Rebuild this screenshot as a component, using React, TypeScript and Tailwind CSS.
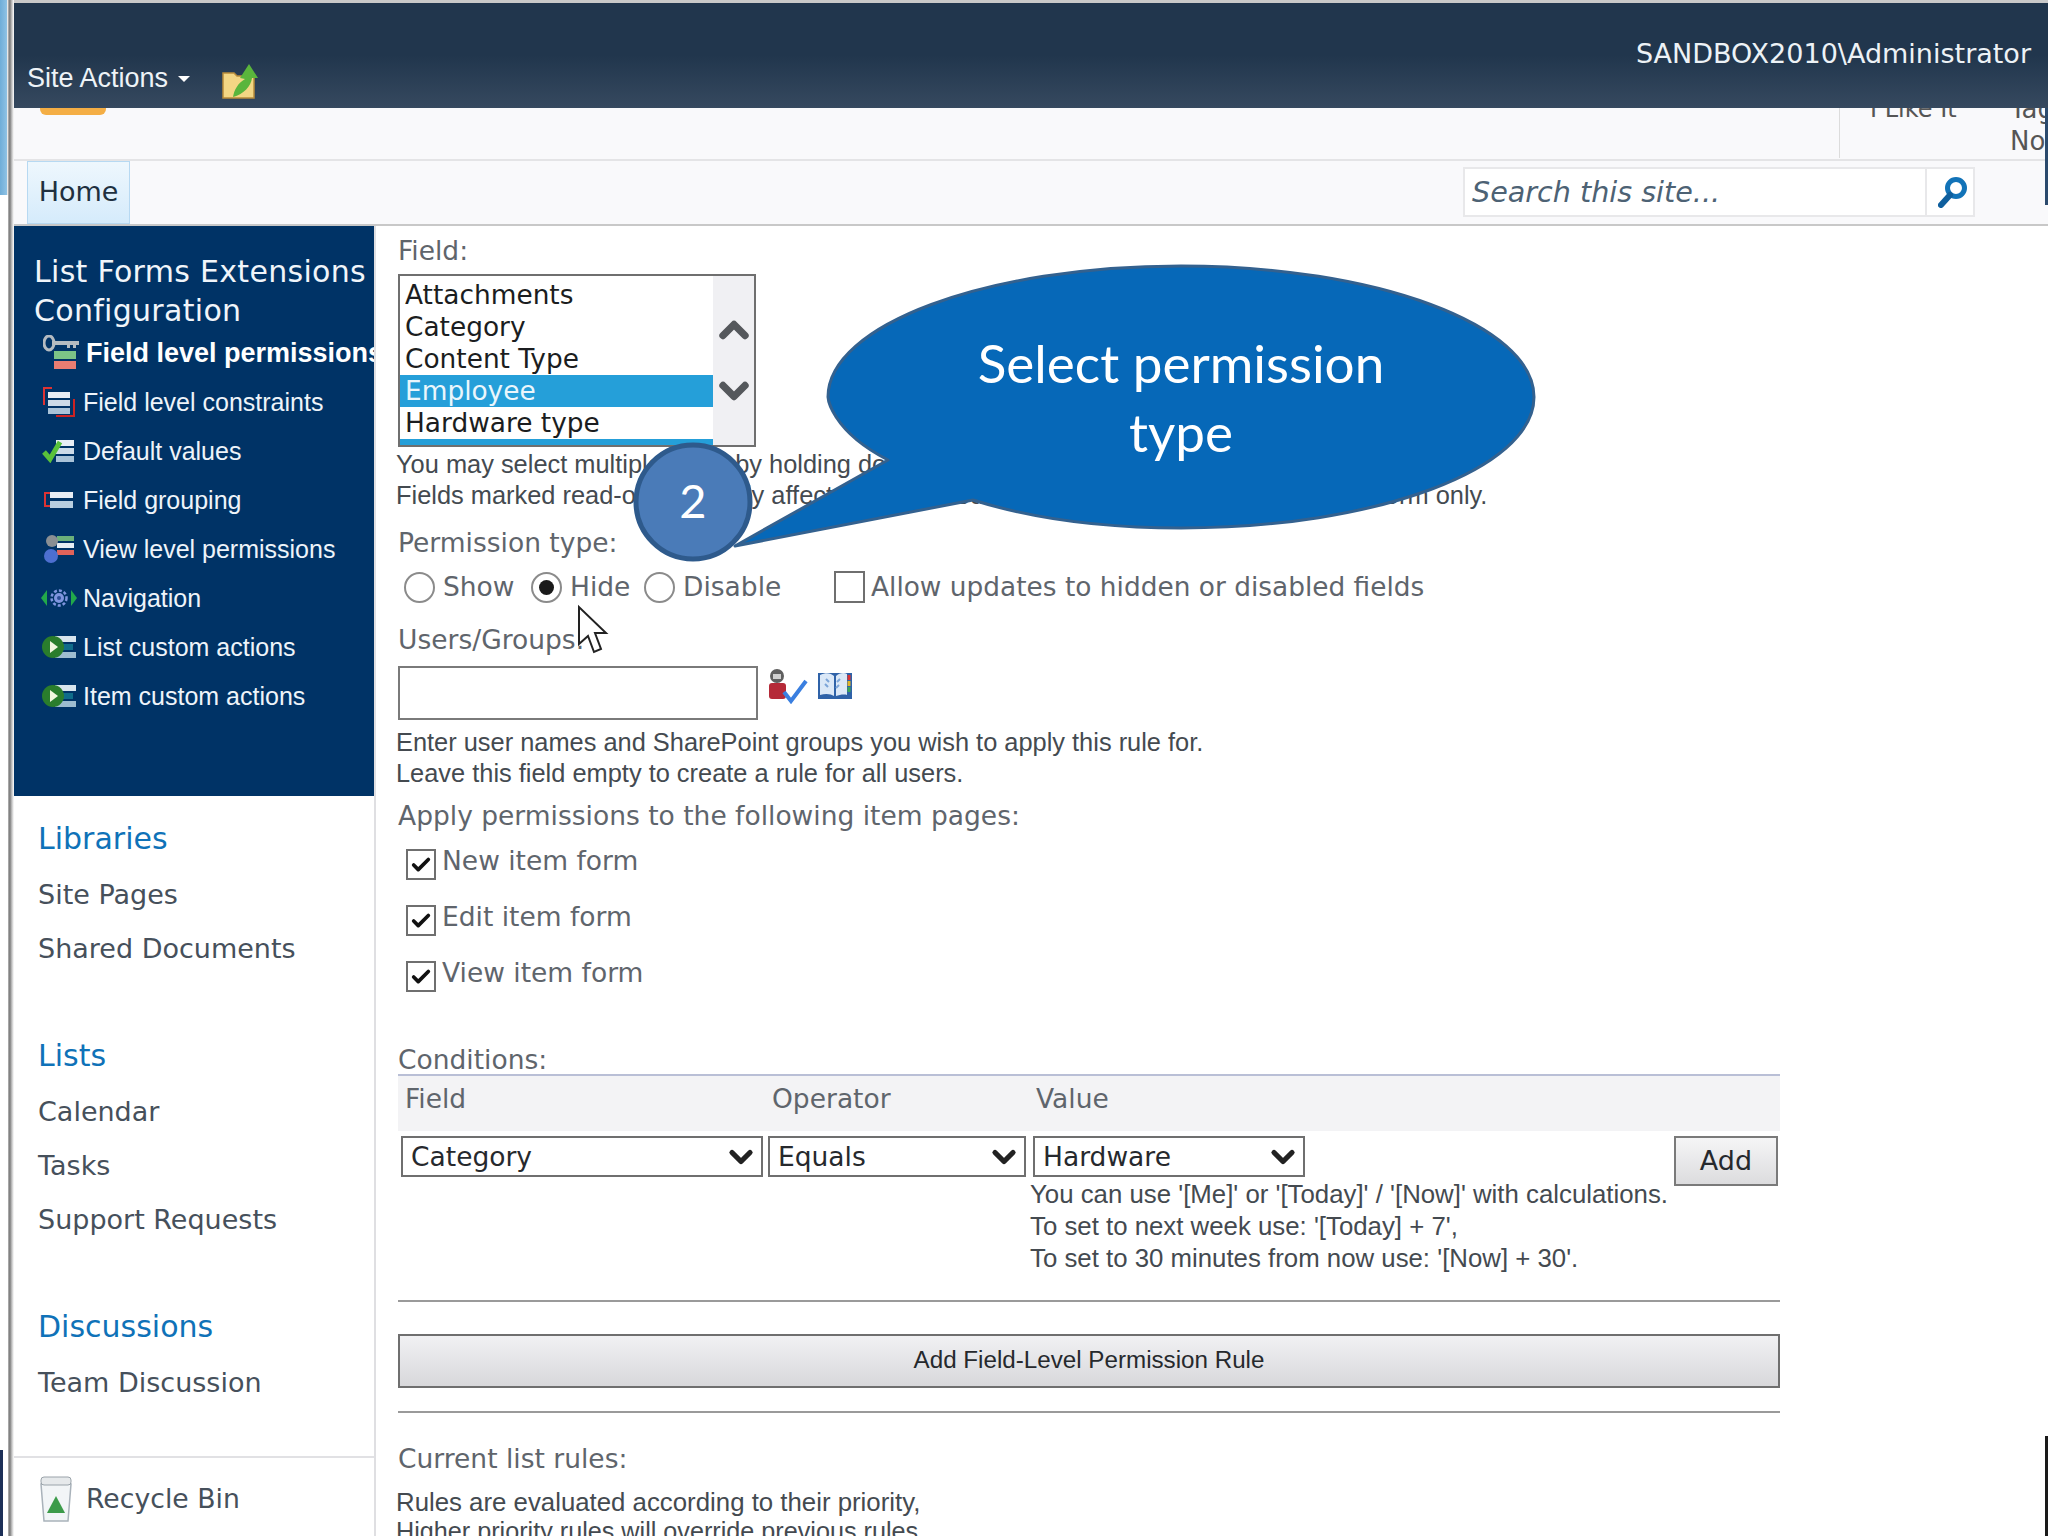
import { Check, ChevronDown, ChevronUp } from "lucide-react";

const navItems = [
  { label: "Field level constraints", icon: "constraints" },
  { label: "Default values", icon: "defaults" },
  { label: "Field grouping", icon: "grouping" },
  { label: "View level permissions", icon: "view" },
  { label: "Navigation", icon: "navigation" },
  { label: "List custom actions", icon: "action" },
  { label: "Item custom actions", icon: "action" },
];

const listItems = ["Attachments", "Category", "Content Type", "Employee", "Hardware type"];

const verdana = "font-['DejaVu_Sans',sans-serif]";
const tahoma = "font-['Liberation_Sans',sans-serif]";

// little stacked bars used by most of the sidebar icons
function Bars({ x = 14, y = 4, w = 20 }: { x?: number; y?: number; w?: number }) {
  return (
    <g>
      <rect x={x} y={y} width={w} height="6" fill="#e8eef5" />
      <rect x={x} y={y + 8} width={w} height="6" fill="#cddbe8" />
      <rect x={x} y={y + 16} width={w} height="6" fill="#a9c3d8" />
    </g>
  );
}

function NavIcon({ type }: { type: string }) {
  if (type === "permissions") {
    return (
      <svg className="shrink-0" width="38" height="36" viewBox="0 0 38 36">
        <ellipse cx="6" cy="8" rx="5" ry="7" fill="none" stroke="#b4bbc1" strokeWidth="3" />
        <path d="M9 6h27v4h-3v3h-3v-3h-3v3h-3v-3H9z" fill="#b4bbc1" />
        <rect x="11" y="16" width="22" height="8" fill="#7cc487" />
        <rect x="11" y="26" width="22" height="8" fill="#ea7d72" />
      </svg>
    );
  }
  if (type === "constraints") {
    return (
      <svg width="32" height="30" viewBox="0 0 32 30">
        <path d="M9 1H1v17" stroke="#d33" strokeWidth="2" fill="none" />
        <path d="M31 12v17H13" stroke="#c22" strokeWidth="2" fill="none" />
        <Bars x={5} y={5} w={22} />
      </svg>
    );
  }
  if (type === "defaults") {
    return (
      <svg width="34" height="24" viewBox="0 0 34 24">
        <Bars x={14} y={1} w={18} />
        <path d="M2 13l6 7L18 3" stroke="#59c13a" strokeWidth="5" fill="none" />
      </svg>
    );
  }
  if (type === "grouping") {
    return (
      <svg width="30" height="18" viewBox="0 0 30 18">
        <path d="M8 2H1v13h7" stroke="#d33" strokeWidth="2" fill="none" />
        <rect x="6" y="1" width="23" height="6" fill="#e8eef5" />
        <rect x="6" y="10" width="23" height="7" fill="#b9cfe0" />
      </svg>
    );
  }
  if (type === "view") {
    return (
      <svg width="32" height="30" viewBox="0 0 32 30">
        <rect x="14" y="2" width="17" height="5" fill="#6cb07a" />
        <rect x="14" y="9" width="17" height="5" fill="#e8eef5" />
        <rect x="14" y="16" width="17" height="5" fill="#e0635a" />
        <circle cx="9" cy="7" r="6" fill="#8a8f93" />
        <circle cx="8" cy="22" r="7" fill="#4d6fd0" />
      </svg>
    );
  }
  if (type === "navigation") {
    return (
      <svg width="36" height="20" viewBox="0 0 36 20">
        <path d="M0 10l6-8v16z" fill="#22a84a" />
        <path d="M36 10l-6-8v16z" fill="#22a84a" />
        <circle cx="18" cy="10" r="7.5" fill="none" stroke="#7f95de" strokeWidth="2.5" strokeDasharray="3 2" />
        <circle cx="18" cy="10" r="5" fill="#7f95de" />
        <circle cx="18" cy="10" r="2" fill="#2b4d96" />
      </svg>
    );
  }
  return (
    <svg width="36" height="26" viewBox="0 0 36 26">
      <rect x="14" y="2" width="21" height="6" fill="#d8e5ee" />
      <rect x="18" y="10" width="14" height="6" fill="#0f6c8a" />
      <rect x="14" y="18" width="21" height="6" fill="#9dbccf" />
      <circle cx="12" cy="13" r="11" fill="#2a7d2c" />
      <path d="M9 7l8 6-8 6z" fill="#f2f7e0" />
    </svg>
  );
}

function NavLink({ children, bold }: { children: React.ReactNode; bold?: boolean }) {
  return (
    <div className={`whitespace-nowrap leading-[32px] ${tahoma} ${bold ? "text-[27px] font-bold text-white" : "text-[25px] text-[#eef4fa]"}`}>
      {children}
    </div>
  );
}

function SideLink({ children }: { children: React.ReactNode }) {
  return <div className={`h-[54px] pl-[24px] text-[27px] leading-[54px] text-[#46505b] ${verdana}`}>{children}</div>;
}

function SideHeading({ children }: { children: React.ReactNode }) {
  return <div className={`mb-[9px] pl-[24px] text-[30px] leading-[40px] text-[#0f72b8] ${verdana}`}>{children}</div>;
}

function Label({ children, className = "" }: { children: React.ReactNode; className?: string }) {
  return <div className={`text-[26.5px] leading-[32px] whitespace-nowrap text-[#5f656c] ${verdana} ${className}`}>{children}</div>;
}

function Help({ children }: { children: React.ReactNode }) {
  return <div className={`text-[25.4px] leading-[31px] whitespace-nowrap text-[#444a50] ${tahoma}`}>{children}</div>;
}

function Hint({ children }: { children: React.ReactNode }) {
  return <div className={`text-[25.8px] leading-[32px] whitespace-nowrap text-[#444a50] ${tahoma}`}>{children}</div>;
}

function Radio({ on }: { on?: boolean }) {
  return (
    <span className="flex h-[31px] w-[31px] items-center justify-center rounded-full border-2 border-[#8b8b8b] bg-white">
      {on && <span className="h-[15px] w-[15px] rounded-full bg-[#1a1a1a]" />}
    </span>
  );
}

function CheckRow({ label }: { label: string }) {
  return (
    <div className="flex h-[56px] items-start pl-[8px]">
      <span className="mt-[4px] flex h-[31px] w-[30px] items-center justify-center border-2 border-[#6f6f6f] bg-white">
        <Check size={22} strokeWidth={4} className="text-[#111]" />
      </span>
      <span className={`ml-[6px] text-[26.5px] leading-[32px] text-[#5f656c] ${verdana}`}>{label}</span>
    </div>
  );
}

function Dropdown({ value, width }: { value: string; width: string }) {
  return (
    <div className={`flex h-[41px] items-center justify-between overflow-hidden border-2 border-[#6f6f6f] bg-white pl-[8px] pr-[2px] ${width}`}>
      <span className={`text-[26.5px] leading-[32px] text-[#26292d] ${verdana}`}>{value}</span>
      <ChevronDown size={36} strokeWidth={3.5} className="text-[#222]" />
    </div>
  );
}

export default function App() {
  return (
    <div className="relative flex h-[1536px] w-[2048px] overflow-hidden bg-white">
      {/* window edge on the left */}
      <div className="flex w-[14px] shrink-0 flex-col">
        <div className="h-[195px] bg-[linear-gradient(90deg,#6fadd8_0,#8fc2e4_50%,#e8e8e8_50%,#e8e8e8_58%,#b5b5b5_58%,#777_70%,#c4c4c4_85%,#fff_100%)]" />
        <div className="flex-1 bg-[linear-gradient(90deg,#fff_0,#fff_58%,#b5b5b5_58%,#777_70%,#c4c4c4_85%,#fff_100%)]" />
        <div className="h-[86px] bg-[linear-gradient(90deg,#1c2f57_0,#1c2f57_25%,#fff_25%,#fff_58%,#b5b5b5_58%,#777_70%,#c4c4c4_85%,#fff_100%)]" />
      </div>

      <div className="flex min-w-0 flex-1 flex-col">
        {/* top bar */}
        <div className="h-[3px] bg-[#c9c9c9]" />
        <div className="flex h-[105px] items-start justify-between bg-[linear-gradient(180deg,#21364d_0,#21364d_50%,#36495f_100%)] pl-[13px] pr-[17px] text-white">
          <div className="mt-[53px] flex items-center">
            <span className={`text-[27px] leading-[36px] text-[#eef3f7] ${tahoma}`}>Site Actions</span>
            <span className="ml-[10px] mt-[2px] h-0 w-0 border-x-[6px] border-t-[6px] border-x-transparent border-t-white" />
            <svg className="ml-[32px] mt-[6px]" width="38" height="38" viewBox="0 0 38 38">
              <path d="M1 11h11l3 3h17v22H1z" fill="#f3d684" stroke="#b98c3a" strokeWidth="1.5" />
              <path d="M11 35c1-7 5-14 12-18l-5-1L27 2l9 14-6 0c-1 8-8 16-19 19z" fill="#5ab53c" />
            </svg>
          </div>
          <span className={`mt-[33px] text-[27px] leading-[36px] text-[#edf2f6] ${verdana}`}>SANDBOX2010\Administrator</span>
        </div>

        {/* ribbon leftovers */}
        <div className="flex h-[53px] items-start justify-between overflow-hidden border-b-2 border-[#e4e4e6] bg-[#f9f9fb]">
          <div className="ml-[26px] h-[7px] w-[66px] rounded-b-[6px] bg-[#f4ae45]" />
          <div className="flex h-[50px] border-l border-[#dcdcdc]">
            <div className={`-mt-[15px] w-[170px] pl-[30px] text-[24px] leading-[32px] text-[#555] ${verdana}`}>I Like It</div>
            <div className={`-mt-[15px] w-[38px] overflow-hidden text-[26px] leading-[32px] text-[#555] ${verdana}`}>
              <div>Tag</div>
              <div>No</div>
            </div>
          </div>
        </div>

        {/* nav row */}
        <div className="flex h-[65px] items-start justify-between border-b-2 border-[#c8c8c8] bg-[#f9f9fb] pl-[13px] pr-[73px]">
          <div className={`flex h-[63px] w-[103px] items-center justify-center border border-[#b7d9f2] bg-[linear-gradient(180deg,#eef7fd,#d5ebfb)] text-[27px] text-[#20303f] ${verdana}`}>
            Home
          </div>
          <div className="mt-[6px] flex h-[50px] w-[512px] border-2 border-[#e8e8ea] bg-white">
            <div className={`flex-1 pl-[7px] text-[28.6px] italic leading-[46px] text-[#4d6274] ${verdana}`}>Search this site...</div>
            <div className="flex w-[48px] items-center justify-center border-l-2 border-[#e8e8ea] pl-[5px]">
              <svg width="30" height="32" viewBox="0 0 30 32">
                <circle cx="18" cy="12" r="8.5" fill="none" stroke="#1273b8" strokeWidth="5" />
                <path d="M12 19L3 29" stroke="#0f5f9e" strokeWidth="6" strokeLinecap="round" />
              </svg>
            </div>
          </div>
        </div>

        <div className="flex min-h-0 flex-1">
          {/* sidebar */}
          <div className="flex w-[362px] shrink-0 flex-col border-r-2 border-[#dfdfe2]">
            <div className="h-[570px] overflow-hidden bg-[#003366] pl-[20px] pt-[26px]">
              <div className={`whitespace-nowrap text-[30px] leading-[39px] tracking-[0.3px] text-[#f0f5fa] ${verdana}`}>
                List Forms Extensions
                <br />
                Configuration
              </div>
              <div className="-mt-[1px] flex h-[48px] items-center gap-[5px] pl-[9px]">
                <NavIcon type="permissions" />
                <NavLink bold>Field level permissions</NavLink>
              </div>
              {navItems.map((item) => (
                <div key={item.label} className="flex h-[49px] items-center">
                  <div className="flex w-[49px] shrink-0 justify-center">
                    <NavIcon type={item.icon} />
                  </div>
                  <NavLink>{item.label}</NavLink>
                </div>
              ))}
            </div>
            <div className="flex flex-1 flex-col pt-[23px]">
              <SideHeading>Libraries</SideHeading>
              <SideLink>Site Pages</SideLink>
              <SideLink>Shared Documents</SideLink>
              <div className="mt-[60px]" />
              <SideHeading>Lists</SideHeading>
              <SideLink>Calendar</SideLink>
              <SideLink>Tasks</SideLink>
              <SideLink>Support Requests</SideLink>
              <div className="mt-[60px]" />
              <SideHeading>Discussions</SideHeading>
              <SideLink>Team Discussion</SideLink>
              <div className="mt-[46px] flex items-center border-t-2 border-[#e1e1e4] pl-[25px] pt-[18px]">
                <svg width="34" height="46" viewBox="0 0 34 46">
                  <path d="M2 8h30l-3 37H5z" fill="#f2f5f7" stroke="#a9b2ba" strokeWidth="1.5" />
                  <rect x="2" y="1" width="30" height="8" rx="3" fill="#e6e9eb" stroke="#9aa3aa" />
                  <path d="M17 20l9 17H8z" fill="#3c9b4a" />
                </svg>
                <span className={`ml-[13px] text-[26.7px] leading-[36px] text-[#46505b] ${verdana}`}>Recycle Bin</span>
              </div>
            </div>
          </div>

          {/* form */}
          <div className="min-w-0 flex-1 pl-[22px] pr-[268px] pt-[9px]">
            <Label>Field:</Label>
            <div className="mt-[7px] flex h-[173px] w-[358px] overflow-hidden border-2 border-[#6f6f6f] bg-white">
              <div className="flex-1 overflow-hidden pt-[3px]">
                {listItems.map((name) => (
                  <div
                    key={name}
                    className={`h-[32px] pl-[5px] text-[26.4px] leading-[32px] ${verdana} ${name === "Employee" ? "bg-[#259fd9] text-[#eaf6fc]" : "text-[#1b1d20]"}`}
                  >
                    {name}
                  </div>
                ))}
                <div className="h-[10px] bg-[#259fd9]" />
              </div>
              <div className="flex w-[41px] flex-col items-center gap-[17px] bg-[#f0f0f3] pt-[32px]">
                <ChevronUp size={44} strokeWidth={4} className="text-[#55585c]" />
                <ChevronDown size={44} strokeWidth={4} className="text-[#55585c]" />
              </div>
            </div>
            <div className="-ml-[2px] mt-[2px]">
              <Help>You may select multiple fields by holding down the Ctrl key.</Help>
              <Help>Fields marked read-only will only affect the rendered field values shown in the edit item form only.</Help>
            </div>
            <Label className="mt-[16px]">Permission type:</Label>
            <div className="mt-[8px] flex h-[40px] items-center pl-[6px]">
              <Radio />
              <span className={`ml-[8px] w-[88px] text-[26.5px] leading-[32px] text-[#5f656c] ${verdana}`}>Show</span>
              <Radio on />
              <span className={`ml-[8px] w-[74px] text-[26.5px] leading-[32px] text-[#5f656c] ${verdana}`}>Hide</span>
              <Radio />
              <span className={`ml-[8px] w-[151px] text-[26.5px] leading-[32px] text-[#5f656c] ${verdana}`}>Disable</span>
              <span className="h-[32px] w-[31px] border-2 border-[#6f6f6f] bg-white" />
              <span className={`ml-[6px] text-[26.4px] leading-[32px] whitespace-nowrap text-[#5f656c] ${verdana}`}>Allow updates to hidden or disabled fields</span>
            </div>
            <Label className="mt-[17px]">Users/Groups:</Label>
            <div className="mt-[10px] flex items-start">
              <div className="h-[54px] w-[360px] border-2 border-[#7a7a7a] bg-white" />
              <svg className="ml-[10px] mt-[2px]" width="40" height="36" viewBox="0 0 40 36">
                <circle cx="9" cy="8" r="7" fill="#5f5f5f" />
                <path d="M5 6h8v5H5z" fill="#cfcfcf" />
                <rect x="1" y="15" width="17" height="16" rx="3" fill="#b52a38" />
                <path d="M16 24l7 9L38 13" stroke="#3a7fe0" strokeWidth="4" fill="none" />
              </svg>
              <svg className="ml-[8px] mt-[4px]" width="38" height="30" viewBox="0 0 38 30">
                <path d="M2 3h34v26H2z" fill="#2f62a8" />
                <path d="M4 5c6-3 11-2 14 1v20c-3-2-8-3-14-1z" fill="#dbe8f7" />
                <path d="M20 6c3-3 8-4 11-2v21c-3-1-8 0-11 1z" fill="#dbe8f7" />
                <path d="M10 9l3 3M9 14l3 3M24 9l-3 3M23 15l-3 3" stroke="#7da5d8" strokeWidth="2" />
                <path d="M33 5v5" stroke="#d33" strokeWidth="3" />
                <path d="M33 11v5" stroke="#e0b52a" strokeWidth="3" />
                <path d="M33 17v5" stroke="#3aa655" strokeWidth="3" />
              </svg>
            </div>
            <div className="-ml-[2px] mt-[7px]">
              <Help>Enter user names and SharePoint groups you wish to apply this rule for.</Help>
              <Help>Leave this field empty to create a rule for all users.</Help>
            </div>
            <Label className="mt-[11px]">Apply permissions to the following item pages:</Label>
            <div className="mt-[13px]">
              <CheckRow label="New item form" />
              <CheckRow label="Edit item form" />
              <CheckRow label="View item form" />
            </div>
            <Label className="mt-[31px]">Conditions:</Label>
            <div className={`-mt-[2px] flex h-[57px] border-t-2 border-[#b9bfd6] bg-[#f3f3f5] pt-[7px] text-[26.5px] leading-[32px] text-[#5f656c] ${verdana}`}>
              <span className="w-[374px] pl-[7px]">Field</span>
              <span className="w-[264px]">Operator</span>
              <span>Value</span>
            </div>
            <div className="mt-[5px] flex items-start pl-[3px]">
              <Dropdown value="Category" width="w-[362px]" />
              <Dropdown value="Equals" width="ml-[5px] w-[258px]" />
              <Dropdown value="Hardware" width="ml-[7px] w-[272px]" />
              <div className={`ml-auto mr-[2px] flex h-[50px] w-[104px] items-center justify-center border-2 border-[#7a7a7a] bg-[linear-gradient(180deg,#f5f5f6,#dcdcde)] text-[27px] text-[#26292d] ${verdana}`}>
                Add
              </div>
            </div>
            <div className="ml-[632px] -mt-[8px]">
              <Hint>You can use '[Me]' or '[Today]' / '[Now]' with calculations.</Hint>
              <Hint>To set to next week use: '[Today] + 7',</Hint>
              <Hint>To set to 30 minutes from now use: '[Now] + 30'.</Hint>
            </div>
            <div className="mt-[26px] h-[2px] bg-[#9a9a9a]" />
            <div className={`mt-[32px] flex h-[54px] items-center justify-center border-2 border-[#6f6f6f] bg-[linear-gradient(180deg,#f1f1f3,#d8d8db)] pb-[2px] text-[24.2px] text-[#26292d] ${tahoma}`}>
              Add Field-Level Permission Rule
            </div>
            <div className="mt-[23px] h-[2px] bg-[#9a9a9a]" />
            <Label className="mt-[30px]">Current list rules:</Label>
            <div className="-ml-[2px] mt-[13px]">
              <div className={`text-[25.8px] leading-[29px] whitespace-nowrap text-[#444a50] ${tahoma}`}>Rules are evaluated according to their priority,</div>
              <div className={`text-[25.2px] leading-[29px] whitespace-nowrap text-[#444a50] ${tahoma}`}>Higher priority rules will override previous rules.</div>
            </div>
          </div>
        </div>
      </div>

      {/* speech bubble annotation over the page */}
      <svg className="absolute left-0 top-0" width="2048" height="1536" viewBox="0 0 2048 1536">
        <path
          d="M735 546 L888 460 C 830 430 828 397 828 397 C 828 325 986 266 1181 266 C 1376 266 1534 325 1534 397 C 1534 469 1376 528 1181 528 C 1100 528 1030 518 973 500 Z"
          fill="#0668b8"
          stroke="#33618f"
          strokeWidth="3"
          strokeLinejoin="round"
        />
        <circle cx="693" cy="502" r="57" fill="#4a7bb8" stroke="#2e5a8c" strokeWidth="5" />
        <path d="M579 607 L579 644 L588 636 L594 652 L601 649 L595 633 L606 633 Z" fill="#fff" stroke="#222" strokeWidth="2" />
      </svg>
      <div className="absolute left-[931px] top-[328px] w-[500px] text-center font-['Lato',sans-serif] text-[53px] leading-[69px] text-white">
        Select permission
        <br />
        type
      </div>
      <div className="absolute left-[653px] top-[470px] w-[80px] text-center font-['Lato',sans-serif] text-[47px] leading-[60px] text-white">2</div>

      {/* bits of the next window on the right edge */}
      <div className="absolute right-0 top-[108px] h-[97px] w-[3px] bg-[#2b4a6d]" />
      <div className="absolute bottom-0 right-0 h-[100px] w-[3px] bg-[#1a1a1a]" />
    </div>
  );
}
